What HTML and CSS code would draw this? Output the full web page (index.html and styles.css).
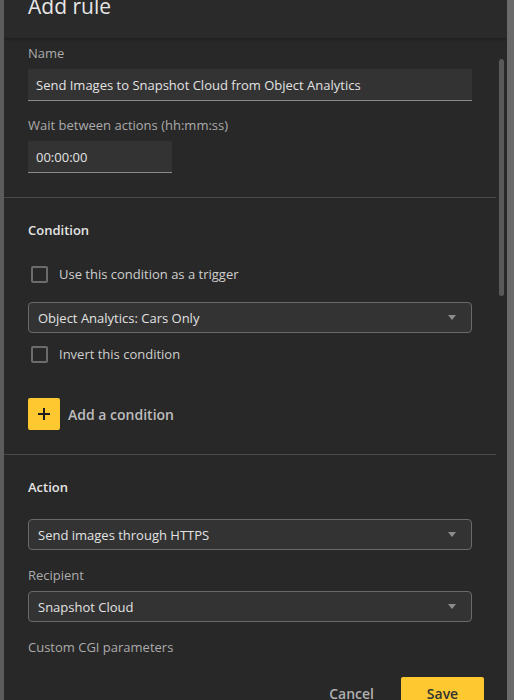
FILE: index.html
```html
<!DOCTYPE html>
<html lang="en">
<head>
<meta charset="utf-8">
<title>Add rule</title>
<link rel="stylesheet" href="styles.css">
</head>
<body>
<div class="page">
  <div class="dialog">
    <header class="dlg-header">
      <h1 class="title">Add rule</h1>
    </header>
    <div class="dlg-body">
      <div class="content">
        <section class="section first">
          <label class="field-label">Name</label>
          <div class="input wide">Send Images to Snapshot Cloud from Object Analytics</div>
          <label class="field-label gap15">Wait between actions (hh:mm:ss)</label>
          <div class="input narrow">00:00:00</div>
        </section>
        <div class="divider"></div>
        <section class="section">
          <h2 class="heading">Condition</h2>
          <div class="check-row r1"><span class="checkbox"></span><span class="check-label">Use this condition as a trigger</span></div>
          <div class="select s1"><span>Object Analytics: Cars Only</span><span class="arrow"></span></div>
          <div class="check-row r2"><span class="checkbox"></span><span class="check-label">Invert this condition</span></div>
          <div class="add-row">
            <span class="add-btn"><svg width="14" height="14" viewBox="0 0 14 14"><path d="M7 1v12M1 7h12" stroke="#1e1e1e" stroke-width="2"/></svg></span>
            <span class="add-label">Add a condition</span>
          </div>
        </section>
        <div class="divider"></div>
        <section class="section">
          <h2 class="heading">Action</h2>
          <div class="select s2"><span>Send images through HTTPS</span><span class="arrow"></span></div>
          <label class="field-label gap16">Recipient</label>
          <div class="select s3"><span>Snapshot Cloud</span><span class="arrow"></span></div>
          <label class="field-label gap16">Custom CGI parameters</label>
        </section>
      </div>
      <div class="scroll-track"><div class="scroll-thumb"></div></div>
    </div>
    <footer class="dlg-footer">
      <button class="btn cancel">Cancel</button>
      <button class="btn save">Save</button>
    </footer>
  </div>
</div>
</body>
</html>
```
FILE: styles.css
```css
* { box-sizing: border-box; }
html, body { margin: 0; padding: 0; }
body {
  background: #6a6a6a;
  font-family: "Open Sans", "Noto Sans", sans-serif;
  overflow: hidden;
  height: 700px;
}
.page {
  display: flex;
  height: 700px;
  background: linear-gradient(to right, #5c5c5c 0, #5c5c5c 4px, transparent 4px);
}
.dialog {
  margin-left: 4px;
  width: 503px;
  height: 700px;
  background: #282828;
  display: flex;
  flex-direction: column;
  overflow: hidden;
}
.dlg-header {
  height: 38px;
  flex-shrink: 0;
  background: #2a2a2a;
  box-shadow: 0 1px 3px rgba(0,0,0,0.35);
  padding-left: 24px;
  position: relative;
  z-index: 1;
}
.title {
  margin: -8px 0 0 0;
  font-size: 21px;
  line-height: 28px;
  font-weight: 400;
  color: #e6e6e6;
}
.dlg-body {
  height: 623px;
  flex-shrink: 0;
  display: flex;
  overflow: hidden;
}
.content {
  width: 492px;
  flex-shrink: 0;
}
.section {
  padding: 23px 24px 24px;
  display: flex;
  flex-direction: column;
}
.section.first { padding-top: 6px; }
.field-label {
  font-size: 13px;
  line-height: 18px;
  color: #ababab;
  display: block;
}
.gap15 { margin-top: 15px; }
.gap16 { margin-top: 16px; }
.input {
  margin-top: 7px;
  height: 32px;
  background: #333333;
  border-bottom: 1px solid #8a8a8a;
  border-radius: 2px 2px 0 0;
  padding: 0 8px;
  font-size: 13px;
  line-height: 32px;
  color: #e2e2e2;
}
.input.wide { width: 444px; }
.input.narrow { width: 144px; }
.divider {
  height: 1px;
  background: #4a4a4a;
}
.heading {
  margin: 0;
  font-size: 13px;
  line-height: 18px;
  font-weight: 600;
  color: #e4e4e4;
}
.check-row {
  display: flex;
  align-items: center;
  height: 24px;
}
.r1 { margin-top: 23px; }
.r2 { margin-top: 9px; }
.checkbox {
  width: 17px;
  height: 17px;
  margin-left: 3px;
  border: 2px solid #6b6b6b;
  border-radius: 2px;
  flex-shrink: 0;
}
.check-label {
  margin-left: 11px;
  font-size: 13px;
  color: #cfcfcf;
}
.select {
  height: 31px;
  width: 444px;
  border: 1px solid #6a6a6a;
  border-radius: 4px;
  background: #333333;
  display: flex;
  align-items: center;
  justify-content: space-between;
  padding: 0 15px 0 9px;
  font-size: 13px;
  color: #e2e2e2;
}
.s1 { margin-top: 16px; }
.s2 { margin-top: 23px; }
.s3 { margin-top: 7px; }
.arrow {
  width: 0;
  height: 0;
  border-left: 4px solid transparent;
  border-right: 4px solid transparent;
  border-top: 5px solid #8c8c8c;
}
.add-row {
  margin-top: 32px;
  display: flex;
  align-items: center;
}
.add-btn {
  width: 32px;
  height: 32px;
  background: #fdc830;
  border-radius: 2px;
  display: flex;
  align-items: center;
  justify-content: center;
}
.add-label {
  margin-left: 8px;
  font-size: 14px;
  font-weight: 600;
  color: #bdbdbd;
}
.scroll-track {
  width: 11px;
  flex-shrink: 0;
  padding-top: 21px;
  padding-left: 3px;
}
.scroll-thumb {
  width: 5px;
  height: 237px;
  background: #595959;
  border-radius: 3px;
}
.dlg-footer {
  flex-shrink: 0;
  display: flex;
  justify-content: flex-end;
  align-items: flex-start;
  padding: 16px 23px 0 0;
}
.btn {
  font-family: "Open Sans", "Noto Sans", sans-serif;
  font-size: 14px;
  font-weight: 600;
  height: 32px;
  border: none;
  border-radius: 2px;
  cursor: pointer;
}
.cancel {
  background: transparent;
  color: #b0b0b0;
  padding: 0 16px;
  margin-right: 11px;
}
.save {
  background: #fdc830;
  color: #333;
  width: 83px;
}
```
